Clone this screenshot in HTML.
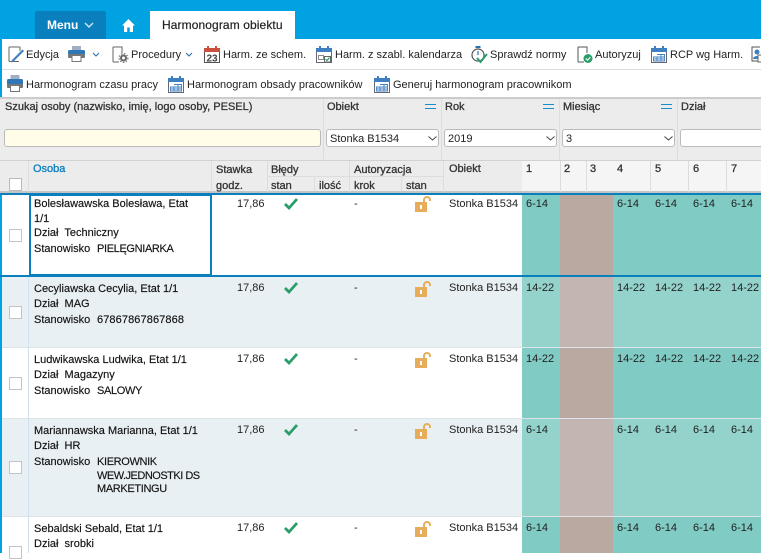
<!DOCTYPE html>
<html><head><meta charset="utf-8">
<style>
html,body{margin:0;padding:0}
body{width:761px;height:553px;position:relative;overflow:hidden;background:#fff;font-family:"Liberation Sans",sans-serif;font-size:11px;color:#222}
.t{position:absolute;white-space:nowrap;line-height:14px}
.b{position:absolute}
svg{position:absolute;overflow:visible}
.h{color:#333;-webkit-text-stroke:.3px currentColor}
.p{color:#111;-webkit-text-stroke:.15px currentColor}
.c{letter-spacing:-.35px}
.sel{position:absolute;top:129px;height:16px;background:#fff;border:1px solid #bbb;border-radius:3px}
.v{position:absolute;top:161px;width:1px;height:31px;background:#ddd}
.f{position:absolute;top:99px;width:1px;height:61px;background:#ddd}
.eq{position:absolute;top:104px;width:11px;height:3px;border-top:1px solid #1a8ccc;border-bottom:1px solid #1a8ccc}
.cb{position:absolute;left:9px;width:11px;height:11px;background:#fff;border:1px solid #c4c4c4}
</style></head><body>
<!-- top -->
<div class="b" style="left:0;top:0;width:761px;height:39px;background:#00a2e1"></div>
<div class="b" style="left:35px;top:11px;width:71px;height:28px;background:#0a7fbd;border-radius:2px 2px 0 0"></div>
<div class="t" style="left:47px;top:18px;color:#fff;font-size:12px;font-weight:bold">Menu</div>
<svg style="left:84px;top:22px" width="10" height="6"><path d="M1 1l4 4 4-4" fill="none" stroke="#cfe8f5" stroke-width="1.4"/></svg>
<svg style="left:122px;top:19px" width="13" height="13"><path d="M6.500 0L0 6.500h2V13h3.200V8.500h2.600V13H11V6.500h2z" fill="#fff"/></svg>
<div class="b" style="left:150px;top:11px;width:145px;height:28px;background:#fff"></div>
<div class="t" style="left:162px;top:18px;font-size:12px;letter-spacing:.1px;color:#222;-webkit-text-stroke:.2px #222">Harmonogram obiektu</div>
<!-- toolbar -->
<div class="b" style="left:0;top:39px;width:2px;height:58px;background:#00a2e1"></div>
<div class="b" style="left:2px;top:69px;width:759px;height:1px;background:#ddd"></div>
<div class="b" style="left:0;top:97px;width:761px;height:2px;background:#ccc"></div>
<!-- icons row 1 -->
<svg style="left:8px;top:46px" width="16" height="17"><path d="M12 5V1.500a.5.5 0 0 0-.5-.5H1.500a.5.5 0 0 0-.5.5V15a.5.5 0 0 0 .5.5H11" fill="none" stroke="#666"/><path d="M4 14L14.500 3.500 16 5 5.500 15.500 3 16.500z" fill="#3d7fc1"/></svg>
<div class="t" style="left:26px;top:48px">Edycja</div>
<svg style="left:68px;top:46px" width="17" height="16"><rect x="4" y="0" width="9" height="5" fill="#9fb0c4"/><rect x="0" y="4" width="17" height="5" rx="1.500" fill="#2f78b8"/><rect x="0" y="8" width="17" height="4" rx="1" fill="#777"/><rect x="4" y="9.500" width="9" height="6" fill="#fff" stroke="#777"/></svg>
<svg style="left:92px;top:52px" width="8" height="5"><path d="M1 1l3 3 3-3" fill="none" stroke="#2a6fa8" stroke-width="1.100"/></svg>
<svg style="left:112px;top:46px" width="16" height="17"><path d="M10 7V1H1.500a.5.5 0 0 0-.5.500V15.500a.5.5 0 0 0 .5.500H7" fill="none" stroke="#666"/><circle cx="11.500" cy="12" r="2.500" fill="none" stroke="#666" stroke-width="2"/><circle cx="11.500" cy="12" r="4.400" fill="none" stroke="#666" stroke-width="1" stroke-dasharray="1.500 1.500"/></svg>
<div class="t" style="left:131px;top:48px">Procedury</div>
<svg style="left:185px;top:52px" width="8" height="5"><path d="M1 1l3 3 3-3" fill="none" stroke="#2a6fa8" stroke-width="1.100"/></svg>
<svg style="left:204px;top:46px" width="16" height="17"><rect x=".5" y="2.500" width="15" height="14" fill="#fff" stroke="#555"/><rect x="0" y="2" width="16" height="4" fill="#c8503c"/><rect x="3" y="0" width="2" height="4" fill="#c8503c"/><rect x="11" y="0" width="2" height="4" fill="#c8503c"/><text x="2.500" y="15.500" font-size="10" font-weight="bold" fill="#444" font-family="Liberation Sans">23</text></svg>
<div class="t" style="left:223px;top:48px">Harm. ze schem.</div>
<svg style="left:316px;top:46px" width="16" height="17"><rect x=".5" y="2.500" width="15" height="14" fill="#fff" stroke="#667"/><rect x="0" y="2" width="16" height="4" fill="#3d7fc1"/><rect x="3" y="0" width="2" height="3" fill="#3d7fc1"/><rect x="11" y="0" width="2" height="3" fill="#3d7fc1"/><rect x="2.500" y="9.500" width="5" height="4" fill="none" stroke="#888"/><rect x="8.500" y="10.500" width="6" height="5.500" fill="#fff" stroke="#666"/><path d="M9.500 13l1.500 1.500 2.500-3" fill="none" stroke="#2a9d6a" stroke-width="1.200"/></svg>
<div class="t" style="left:335px;top:48px">Harm. z szabl. kalendarza</div>
<svg style="left:471px;top:46px" width="17" height="17"><circle cx="7" cy="9" r="6" fill="none" stroke="#555" stroke-width="1.200"/><rect x="4.500" y="0" width="5" height="2" fill="#2a6fa8"/><path d="M7 5v4" stroke="#2a6fa8" stroke-width="1.200"/><path d="M6 12l3.500 4L16 8" fill="none" stroke="#2a9d6a" stroke-width="2"/></svg>
<div class="t" style="left:490px;top:48px">Sprawdź normy</div>
<svg style="left:577px;top:46px" width="16" height="17"><path d="M10 7V1H1.500a.5.5 0 0 0-.5.500V15.500a.5.5 0 0 0 .5.500H7" fill="none" stroke="#555"/><circle cx="11" cy="12.500" r="4.500" fill="#2a9d6a"/><path d="M8.800 12.500l1.700 1.700 2.800-3" fill="none" stroke="#fff" stroke-width="1.100"/></svg>
<div class="t" style="left:595px;top:48px">Autoryzuj</div>
<svg style="left:651px;top:46px" width="16" height="17"><rect x=".5" y="2.500" width="15" height="14" fill="#fff" stroke="#667"/><rect x="0" y="2" width="16" height="4" fill="#3d7fc1"/><rect x="3" y="0" width="2" height="3" fill="#3d7fc1"/><rect x="11" y="0" width="2" height="3" fill="#3d7fc1"/><path d="M2.500 11h11v4h-11zM6 11v4M10 11v4M6 8.500h7.500V11M10 8.500v2.500M2.500 13h11" fill="none" stroke="#3d7fc1" stroke-width=".9"/></svg>
<div class="t" style="left:670px;top:48px">RCP wg Harm.</div>
<svg style="left:751px;top:46px" width="16" height="17"><path d="M9 1H1v14h6" fill="none" stroke="#555"/><circle cx="6" cy="6" r="2.500" fill="#3d7fc1"/><path d="M2 13c0-4 8-4 8 0z" fill="#3d7fc1"/><rect x="7" y="9" width="8" height="7" fill="#fff" stroke="#666"/></svg>
<!-- row 2 -->
<svg style="left:7px;top:75px" width="16" height="17"><rect x="3.500" y="0" width="9" height="5" fill="#9fb0c4"/><rect x="0" y="4" width="16" height="6" rx="1.500" fill="#2f78b8"/><rect x="0" y="9" width="16" height="4" rx="1" fill="#777"/><rect x="3.500" y="10.500" width="9" height="6" fill="#fff" stroke="#777"/></svg>
<div class="t" style="left:26px;top:78px">Harmonogram czasu pracy</div>
<svg style="left:168px;top:76px" width="16" height="17"><rect x=".5" y="2.500" width="15" height="14" fill="#fff" stroke="#667"/><rect x="0" y="2" width="16" height="4" fill="#3d7fc1"/><rect x="3" y="0" width="2" height="3" fill="#3d7fc1"/><rect x="11" y="0" width="2" height="3" fill="#3d7fc1"/><path d="M2.500 11h11v4h-11zM6 11v4M10 11v4M6 8.500h7.500V11M10 8.500v2.500M2.500 13h11" fill="none" stroke="#3d7fc1" stroke-width=".9"/></svg>
<div class="t" style="left:187px;top:78px">Harmonogram obsady pracowników</div>
<svg style="left:374px;top:76px" width="16" height="17"><rect x=".5" y="2.500" width="15" height="14" fill="#fff" stroke="#667"/><rect x="0" y="2" width="16" height="4" fill="#3d7fc1"/><rect x="3" y="0" width="2" height="3" fill="#3d7fc1"/><rect x="11" y="0" width="2" height="3" fill="#3d7fc1"/><path d="M2.500 11h11v4h-11zM6 11v4M10 11v4M6 8.500h7.500V11M10 8.500v2.500M2.500 13h11" fill="none" stroke="#3d7fc1" stroke-width=".9"/></svg>
<div class="t" style="left:393px;top:78px">Generuj harmonogram pracownikom</div>
<!-- filter -->
<div class="b" style="left:0;top:99px;width:761px;height:61px;background:#ececec"></div>
<div class="b" style="left:0;top:160px;width:761px;height:1px;background:#d2d2d2"></div>
<div class="f" style="left:323px"></div><div class="f" style="left:441px"></div><div class="f" style="left:559px"></div><div class="f" style="left:677px"></div>
<div class="t h" style="left:5px;top:100px">Szukaj osoby (nazwisko, imię, logo osoby, PESEL)</div>
<div class="t h" style="left:327px;top:100px">Obiekt</div>
<div class="t h" style="left:445px;top:100px">Rok</div>
<div class="t h" style="left:563px;top:100px">Miesiąc</div>
<div class="t h" style="left:681px;top:100px">Dział</div>
<div class="eq" style="left:425px"></div><div class="eq" style="left:543px"></div><div class="eq" style="left:661px"></div>
<div class="b" style="left:4px;top:129px;width:315px;height:16px;background:#fffde8;border:1px solid #bbb;border-radius:3px"></div>
<div class="sel" style="left:326px;width:111px"></div>
<div class="sel" style="left:444px;width:111px"></div>
<div class="sel" style="left:562px;width:111px"></div>
<div class="sel" style="left:680px;width:90px"></div>
<div class="t" style="left:330px;top:132px">Stonka B1534</div>
<div class="t" style="left:448px;top:132px">2019</div>
<div class="t" style="left:566px;top:132px">3</div>
<svg style="left:428px;top:136px" width="9" height="5"><path d="M.5.5l4 3.500 4-3.500" fill="none" stroke="#444"/></svg>
<svg style="left:546px;top:136px" width="9" height="5"><path d="M.5.5l4 3.500 4-3.500" fill="none" stroke="#444"/></svg>
<svg style="left:664px;top:136px" width="9" height="5"><path d="M.5.5l4 3.500 4-3.500" fill="none" stroke="#444"/></svg>
<!-- header -->
<div class="b" style="left:0;top:161px;width:522px;height:30px;background:#ececec"></div>
<div class="b" style="left:522px;top:161px;width:239px;height:30px;background:#f5f5f5"></div>
<div class="b" style="left:0;top:191px;width:761px;height:2px;background:#c4c4c4"></div>
<div class="b" style="left:0;top:193px;width:761px;height:2px;background:#0a7fbd"></div>
<div class="v" style="left:28px"></div><div class="v" style="left:211px"></div><div class="v" style="left:267px"></div><div class="v" style="left:349px"></div>
<div class="v" style="left:314px;top:176px;height:15px"></div><div class="v" style="left:401px;top:176px;height:15px"></div>
<div class="v" style="left:443px"></div><div class="v" style="left:560px"></div><div class="v" style="left:586px"></div><div class="v" style="left:650px"></div><div class="v" style="left:688px"></div><div class="v" style="left:726px"></div>
<div class="b" style="left:267px;top:176px;width:176px;height:1px;background:#ddd"></div>
<div class="cb" style="top:178px;border-color:#bbb"></div>
<div class="t h" style="left:33px;top:162px;color:#0a7fbd">Osoba</div>
<div class="t h" style="left:216px;top:163px">Stawka</div>
<div class="t h" style="left:216px;top:179px">godz.</div>
<div class="t h" style="left:271px;top:163px">Błędy</div>
<div class="t h" style="left:271px;top:179px">stan</div>
<div class="t h" style="left:319px;top:179px">ilość</div>
<div class="t h" style="left:354px;top:163px">Autoryzacja</div>
<div class="t h" style="left:354px;top:179px">krok</div>
<div class="t h" style="left:406px;top:179px">stan</div>
<div class="t h" style="left:449px;top:162px">Obiekt</div>
<div class="t h" style="left:526px;top:162px">1</div>
<div class="t h" style="left:564px;top:162px">2</div>
<div class="t h" style="left:590px;top:162px">3</div>
<div class="t h" style="left:617px;top:162px">4</div>
<div class="t h" style="left:655px;top:162px">5</div>
<div class="t h" style="left:693px;top:162px">6</div>
<div class="t h" style="left:731px;top:162px">7</div>
<!-- left bar -->
<div class="b" style="left:0;top:195px;width:2px;height:358px;background:#00a2e1"></div>
<!-- row backgrounds -->
<div class="b" style="left:2px;top:277px;width:520px;height:71px;background:#e9f0f4"></div>
<div class="b" style="left:2px;top:419px;width:520px;height:98px;background:#e9f0f4"></div>
<div class="b" style="left:522px;top:195px;width:239px;height:80px;background:#80cbc4"></div>
<div class="b" style="left:522px;top:277px;width:239px;height:70px;background:#94d3cb"></div>
<div class="b" style="left:522px;top:348px;width:239px;height:70px;background:#80cbc4"></div>
<div class="b" style="left:522px;top:419px;width:239px;height:97px;background:#94d3cb"></div>
<div class="b" style="left:522px;top:517px;width:239px;height:36px;background:#80cbc4"></div>
<div class="b" style="left:560px;top:195px;width:53px;height:80px;background:#b9a9a1"></div>
<div class="b" style="left:560px;top:277px;width:53px;height:70px;background:#c3b5b1"></div>
<div class="b" style="left:560px;top:348px;width:53px;height:70px;background:#b9a9a1"></div>
<div class="b" style="left:560px;top:419px;width:53px;height:97px;background:#c3b5b1"></div>
<div class="b" style="left:560px;top:517px;width:53px;height:36px;background:#b9a9a1"></div>
<!-- separators -->
<div class="b" style="left:0;top:275px;width:761px;height:2px;background:#0a7fbd"></div>
<div class="b" style="left:2px;top:347px;width:759px;height:1px;background:#dde3e6"></div>
<div class="b" style="left:2px;top:418px;width:759px;height:1px;background:#dde3e6"></div>
<div class="b" style="left:2px;top:516px;width:759px;height:1px;background:#dde3e6"></div>
<div class="b" style="left:28px;top:277px;width:1px;height:276px;background:#cfe0f0"></div>
<!-- selected cell -->
<div class="b" style="left:29px;top:194px;width:179px;height:78px;border:2px solid #0a7fbd"></div>
<!-- checkboxes -->
<div class="cb" style="top:229px"></div>
<div class="cb" style="top:306px"></div>
<div class="cb" style="top:377px"></div>
<div class="cb" style="top:461px"></div>
<div class="cb" style="top:546px"></div>
<!-- person texts -->
<div class="t p" style="left:34px;top:197px">Bolesławawska Bolesława, Etat</div>
<div class="t p" style="left:34px;top:212px">1/1</div>
<div class="t p" style="left:34px;top:226px">Dział&nbsp; Techniczny</div>
<div class="t p" style="left:34px;top:242px">Stanowisko</div><div class="t p c" style="left:97px;top:242px">PIELĘGNIARKA</div>
<div class="t p" style="left:34px;top:282px">Cecyliawska Cecylia, Etat 1/1</div>
<div class="t p" style="left:34px;top:297px">Dział&nbsp; MAG</div>
<div class="t p" style="left:34px;top:313px">Stanowisko</div><div class="t p" style="left:97px;top:313px;letter-spacing:.1px">67867867867868</div>
<div class="t p" style="left:34px;top:353px">Ludwikawska Ludwika, Etat 1/1</div>
<div class="t p" style="left:34px;top:368px">Dział&nbsp; Magazyny</div>
<div class="t p" style="left:34px;top:384px">Stanowisko</div><div class="t p c" style="left:97px;top:384px">SALOWY</div>
<div class="t p" style="left:34px;top:424px">Mariannawska Marianna, Etat 1/1</div>
<div class="t p" style="left:34px;top:439px">Dział&nbsp; HR</div>
<div class="t p" style="left:34px;top:455px">Stanowisko</div>
<div class="t p c" style="left:97px;top:455px">KIEROWNIK</div>
<div class="t p c" style="left:97px;top:469px;letter-spacing:-.5px">WEW.JEDNOSTKI DS</div>
<div class="t p c" style="left:97px;top:482px">MARKETINGU</div>
<div class="t p" style="left:34px;top:522px">Sebaldski Sebald, Etat 1/1</div>
<div class="t p" style="left:34px;top:537px">Dział&nbsp; srobki</div>
<!-- stawka -->
<div class="t" style="left:237px;top:197px">17,86</div>
<div class="t" style="left:237px;top:281px">17,86</div>
<div class="t" style="left:237px;top:352px">17,86</div>
<div class="t" style="left:237px;top:423px">17,86</div>
<div class="t" style="left:237px;top:521px">17,86</div>
<!-- checks -->
<svg style="left:284px;top:198px" width="14" height="12"><path d="M1 6l4 4 8-9" fill="none" stroke="#2a9d6a" stroke-width="2.800"/></svg>
<svg style="left:284px;top:282px" width="14" height="12"><path d="M1 6l4 4 8-9" fill="none" stroke="#2a9d6a" stroke-width="2.800"/></svg>
<svg style="left:284px;top:353px" width="14" height="12"><path d="M1 6l4 4 8-9" fill="none" stroke="#2a9d6a" stroke-width="2.800"/></svg>
<svg style="left:284px;top:424px" width="14" height="12"><path d="M1 6l4 4 8-9" fill="none" stroke="#2a9d6a" stroke-width="2.800"/></svg>
<svg style="left:284px;top:522px" width="14" height="12"><path d="M1 6l4 4 8-9" fill="none" stroke="#2a9d6a" stroke-width="2.800"/></svg>
<!-- dash -->
<div class="t" style="left:354px;top:197px">-</div>
<div class="t" style="left:354px;top:281px">-</div>
<div class="t" style="left:354px;top:352px">-</div>
<div class="t" style="left:354px;top:423px">-</div>
<div class="t" style="left:354px;top:521px">-</div>
<!-- locks -->
<svg style="left:415px;top:196px" width="16" height="16"><path d="M9 6V4a3 3 0 0 1 6 0v1" fill="none" stroke="#e8ad5a" stroke-width="2"/><rect x="0" y="6" width="12" height="10" fill="#e8ad5a"/><rect x="5" y="9" width="2" height="4" fill="#fff"/></svg>
<svg style="left:415px;top:281px" width="16" height="16"><path d="M9 6V4a3 3 0 0 1 6 0v1" fill="none" stroke="#e8ad5a" stroke-width="2"/><rect x="0" y="6" width="12" height="10" fill="#e8ad5a"/><rect x="5" y="9" width="2" height="4" fill="#fff"/></svg>
<svg style="left:415px;top:352px" width="16" height="16"><path d="M9 6V4a3 3 0 0 1 6 0v1" fill="none" stroke="#e8ad5a" stroke-width="2"/><rect x="0" y="6" width="12" height="10" fill="#e8ad5a"/><rect x="5" y="9" width="2" height="4" fill="#fff"/></svg>
<svg style="left:415px;top:423px" width="16" height="16"><path d="M9 6V4a3 3 0 0 1 6 0v1" fill="none" stroke="#e8ad5a" stroke-width="2"/><rect x="0" y="6" width="12" height="10" fill="#e8ad5a"/><rect x="5" y="9" width="2" height="4" fill="#fff"/></svg>
<svg style="left:415px;top:521px" width="16" height="16"><path d="M9 6V4a3 3 0 0 1 6 0v1" fill="none" stroke="#e8ad5a" stroke-width="2"/><rect x="0" y="6" width="12" height="10" fill="#e8ad5a"/><rect x="5" y="9" width="2" height="4" fill="#fff"/></svg>
<!-- obiekt -->
<div class="t" style="left:449px;top:197px">Stonka B1534</div>
<div class="t" style="left:449px;top:281px">Stonka B1534</div>
<div class="t" style="left:449px;top:352px">Stonka B1534</div>
<div class="t" style="left:449px;top:423px">Stonka B1534</div>
<div class="t" style="left:449px;top:521px">Stonka B1534</div>
<!-- shifts -->
<div class="t" style="left:526px;top:197px">6-14</div><div class="t" style="left:617px;top:197px">6-14</div><div class="t" style="left:655px;top:197px">6-14</div><div class="t" style="left:693px;top:197px">6-14</div><div class="t" style="left:731px;top:197px">6-14</div>
<div class="t" style="left:526px;top:281px">14-22</div><div class="t" style="left:617px;top:281px">14-22</div><div class="t" style="left:655px;top:281px">14-22</div><div class="t" style="left:693px;top:281px">14-22</div><div class="t" style="left:731px;top:281px">14-22</div>
<div class="t" style="left:526px;top:352px">14-22</div><div class="t" style="left:617px;top:352px">14-22</div><div class="t" style="left:655px;top:352px">14-22</div><div class="t" style="left:693px;top:352px">14-22</div><div class="t" style="left:731px;top:352px">14-22</div>
<div class="t" style="left:526px;top:423px">6-14</div><div class="t" style="left:617px;top:423px">6-14</div><div class="t" style="left:655px;top:423px">6-14</div><div class="t" style="left:693px;top:423px">6-14</div><div class="t" style="left:731px;top:423px">6-14</div>
<div class="t" style="left:526px;top:521px">6-14</div><div class="t" style="left:617px;top:521px">6-14</div><div class="t" style="left:655px;top:521px">6-14</div><div class="t" style="left:693px;top:521px">6-14</div><div class="t" style="left:731px;top:521px">6-14</div>
</body></html>
